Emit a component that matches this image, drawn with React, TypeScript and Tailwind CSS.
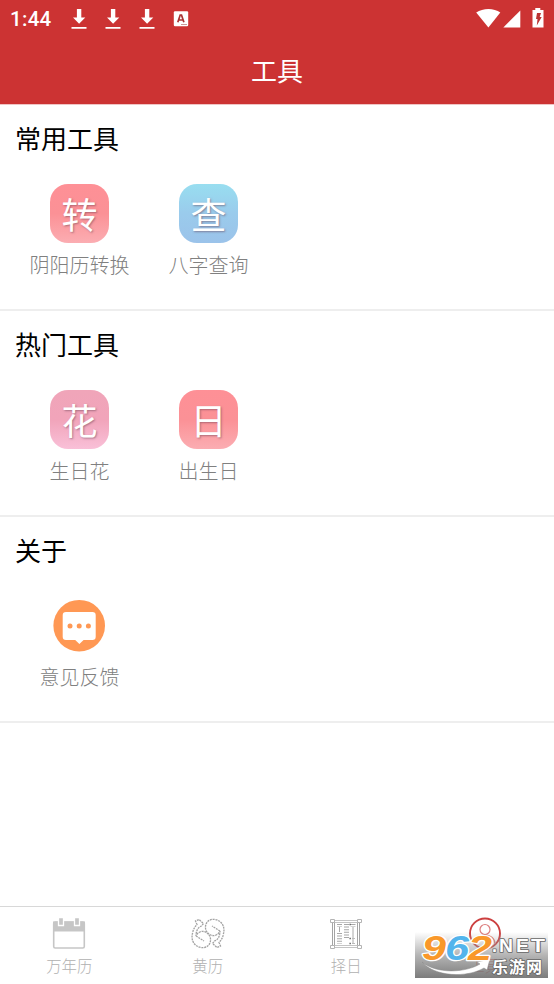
import type { ReactNode } from 'react';

type Tool = { label: string; glyph?: string; tile?: string };

const SECTIONS: { title: string; tools: Tool[] }[] = [
  {
    title: '常用工具',
    tools: [
      { label: '阴阳历转换', glyph: '转', tile: 'from-[#fe9096] via-[#fb9196] to-[#fbadb2]' },
      { label: '八字查询', glyph: '查', tile: 'from-[#98def0] via-[#9acbec] to-[#9bc3ea]' },
    ],
  },
  {
    title: '热门工具',
    tools: [
      { label: '生日花', glyph: '花', tile: 'from-[#f0a5b9] via-[#f1a4ba] to-[#f9c0d8]' },
      { label: '出生日', glyph: '日', tile: 'from-[#fe9096] via-[#fb9196] to-[#fbadb2]' },
    ],
  },
  { title: '关于', tools: [{ label: '意见反馈' }] },
];

function DownloadIcon() {
  return (
    <svg width="16" height="22" viewBox="0 0 16 22" fill="#fff">
      <path d="M5.9 0h4.4v8.4h4L8.1 14.8 2 8.4h3.9zM.5 18h15v1.8H.5z" />
    </svg>
  );
}

function StatusBar() {
  return (
    <div className="flex h-[38px] items-center justify-between pl-[10px] pr-[9px] text-white">
      <div className="flex items-center">
        <span className="w-[61px] pt-px font-[Roboto] text-[20.5px] font-medium leading-none tracking-[0.3px]">1:44</span>
        <div className="flex gap-[18px] pt-px">
          <DownloadIcon />
          <DownloadIcon />
          <DownloadIcon />
        </div>
        <svg className="ml-[18px]" width="16" height="16" viewBox="0 0 16 16">
          <rect x=".8" y=".3" width="14.4" height="15" rx="1.2" fill="#fff" />
          <path d="M4.8 11.2 7.2 4h1.3l2.4 7.2M5.6 9h4.4" fill="none" stroke="#a33" strokeWidth="1.7" />
          <path d="M8 13.5h6" stroke="#c99" />
        </svg>
      </div>
      <div className="flex items-start pb-[2px]">
        <svg width="25" height="20" viewBox="0 0 25 20" fill="#fff">
          <path d="M.2 4.6C7-.1 18-.1 24.3 4.6L12.4 19.4z" />
        </svg>
        <svg className="ml-[2px]" width="18" height="20" viewBox="0 0 18 20" fill="#fff">
          <path d="M17.3 2.5v17H.3z" />
        </svg>
        <svg className="ml-[11px] mr-px" width="12" height="20" viewBox="0 0 12 20">
          <path d="M3.3 0h5v2h3.2v17.5H.5V2h2.8z" fill="#fff" />
          <path d="M5 5h4L7.7 9h2l-4.9 8.5L5.5 11H4z" fill="#b33" />
        </svg>
      </div>
    </div>
  );
}

function FeedbackIcon() {
  return (
    <svg width="59" height="59" viewBox="0 0 59 59">
      <circle cx="29.2" cy="29.7" r="25.8" fill="#ff9854" />
      <path
        d="M16 16h26.4a3.3 3.3 0 0 1 3.3 3.3v21.4a3.3 3.3 0 0 1-3.3 3.3h-8.8l-4.2 4-4.2-4H16a3.3 3.3 0 0 1-3.3-3.3V19.3A3.3 3.3 0 0 1 16 16z"
        fill="#fff"
      />
      <g fill="#ff9854">
        <circle cx="20" cy="30" r="2.5" />
        <circle cx="29.2" cy="30" r="2.5" />
        <circle cx="38.4" cy="30" r="2.5" />
      </g>
    </svg>
  );
}

function ToolItem({ label, glyph, tile }: Tool) {
  return (
    <div className="flex w-[129px] flex-col items-center">
      {glyph ? (
        <div
          className={`flex size-[59px] items-center justify-center rounded-[18px] bg-linear-to-b pb-[2px] text-[36px] leading-none text-white [text-shadow:1px_1px_2px_rgba(100,60,80,0.5)] ${tile}`}
        >
          {glyph}
        </div>
      ) : (
        <FeedbackIcon />
      )}
      <span className="mt-[7px] text-[20px] font-light leading-[30px] text-[#808080]">{label}</span>
    </div>
  );
}

function CalendarIcon() {
  return (
    <svg width="36" height="36" viewBox="0 0 36 36">
      <rect x="2.7" y="6" width="30.6" height="26" rx="1.5" fill="#fff" stroke="#c6c6c6" strokeWidth="1.6" />
      <path d="M2 5.5h32v10H2z" fill="#c6c6c6" />
      <path d="M7.5 1.5h5v8h-5zM23.5 1.5h5v8h-5z" fill="#c6c6c6" stroke="#fff" strokeWidth="1.3" />
    </svg>
  );
}

// one fish: round loop at the bottom, body curling up the left side to a small head
const FISH = 'M9 16.5C13 13.5 20 17 20.5 23C21 29 16 32.5 11 31.5C3 30 1 23 2.5 17.5C3 14 4.5 11 7 8.5L5.5 5L9 3.5L13.5 7.5L11.5 10C8 11 6 15 6 20C7 18 8 17 9 16.5M6 20L14 25';

function AlmanacIcon() {
  return (
    <svg width="36" height="36" viewBox="0 0 36 36" fill="none" stroke="#a2a2a2" strokeWidth="1.3" strokeDasharray="2 .8">
      <path d={FISH} />
      <path d={FISH} transform="rotate(180 18 17.5)" />
    </svg>
  );
}

function ScrollIcon() {
  return (
    <svg width="36" height="36" viewBox="0 0 36 36" fill="none" stroke="#aaa">
      <path d="M5.5 4.5h25M5.5 6.5h25M5.5 29.5h25M5.5 31.5h25" stroke="#c4c4c4" />
      <path d="M4.5 5v26M6.5 5v26M29.5 5v26M31.5 5v26" stroke="#a4a4a4" />
      <path d="M2.5 3.5h4v3h-4zM29.5 3.5h4v3h-4zM2.5 29.5h4v3h-4zM29.5 29.5h4v3h-4z" fill="#fff" stroke="#b4b4b4" />
      <path d="M11.5 8v3M11.5 17v11M18.5 8v14M25 8v3" stroke="#a8a8a8" strokeWidth="5" strokeDasharray="1 1.6" />
      <path d="M11.5 11v5M25 11v17" stroke="#aaa" />
      <path d="M24 27.5h3M24 22.5h3" stroke="#bbb" />
      <path d="M21.5 8.5h1.3M21.5 22.5h1.3M21.5 27.5h1.3" stroke="#555" strokeWidth="1.5" />
    </svg>
  );
}

function ProfileIcon() {
  return (
    <svg width="36" height="36" viewBox="0 0 36 36" fill="none" stroke="#cc3f3f">
      <circle cx="18" cy="17.5" r="15" strokeWidth="1.9" />
      <circle cx="18" cy="13.5" r="5" stroke="#dd7f7f" strokeWidth="1.2" />
      <path d="M8 28c0-12 20-12 20 0" stroke="#dd7f7f" strokeWidth="1.2" />
    </svg>
  );
}

function NavItem({ label, active, children }: { label: string; active?: boolean; children: ReactNode }) {
  return (
    <div className="flex flex-1 flex-col items-center pt-[9px]">
      {children}
      <span className={`mt-[3px] text-[15.4px] font-light leading-5 ${active ? 'text-[#cc3333]' : 'text-[#b0b0b0]'}`}>
        {label}
      </span>
    </div>
  );
}

// Site stamp in the bottom right corner, drawn over the tab bar
function SiteStamp() {
  return (
    <div className="absolute bottom-[6px] right-[6px] h-[46px] w-[133px] bg-linear-to-b from-[#99999900] via-[#999999b8] to-[#757575f2]">
      <svg className="absolute -top-2 left-0 overflow-visible" width="133" height="54" viewBox="0 0 133 54">
        <path d="M7 38c14 12 43 11 58 2l-3-2 13-3-3 11-3-2C52 54 20 53 7 38z" fill="#fff" stroke="#888" strokeWidth=".5" />
        <g
          fontFamily="Liberation Sans"
          fontWeight="bold"
          fontStyle="italic"
          fontSize="35"
          stroke="#fff"
          strokeWidth="2.5"
          strokeLinejoin="round"
          paintOrder="stroke"
        >
          <text x="7" y="36" textLength="24" lengthAdjust="spacingAndGlyphs" fill="#f9982a">9</text>
          <text x="30" y="36" textLength="24" lengthAdjust="spacingAndGlyphs" fill="#52b4ec">6</text>
          <text x="53" y="36" textLength="24" lengthAdjust="spacingAndGlyphs" fill="#f9982a">2</text>
        </g>
        <g fill="#fff" stroke="#666" strokeWidth="1.6" strokeLinejoin="round" paintOrder="stroke" fontWeight="bold">
          <text x="77" y="28" fontFamily="Liberation Sans" fontSize="18" textLength="7">.</text>
          <text x="84" y="28" fontFamily="Liberation Sans" fontSize="18" textLength="14" lengthAdjust="spacingAndGlyphs">N</text>
          <text x="101" y="28" fontFamily="Liberation Sans" fontSize="18" textLength="13" lengthAdjust="spacingAndGlyphs">E</text>
          <text x="116" y="28" fontFamily="Liberation Sans" fontSize="18" textLength="14" lengthAdjust="spacingAndGlyphs">T</text>
          <text x="77" y="49" fontSize="16" textLength="50">乐游网</text>
        </g>
      </svg>
    </div>
  );
}

export default function App() {
  return (
    <div className="relative flex h-[984px] w-[554px] flex-col overflow-hidden bg-white font-['Noto_Sans_CJK_SC',sans-serif]">
      <header className="h-[104px] shrink-0 bg-[#cc3333]">
        <StatusBar />
        <h1 className="pt-[13px] text-center text-[26px] leading-[38px] text-white">工具</h1>
      </header>

      <main className="flex-1 border-t border-[#f0c4c4]">
        {SECTIONS.map(section => (
          <section key={section.title} className="h-[206px] border-b-2 border-[#eeeeee] pl-[15px] pt-[14px]">
            <h2 className="text-[26px] leading-[38px] text-black">{section.title}</h2>
            <div className="mt-[27px] flex">
              {section.tools.map(tool => (
                <ToolItem key={tool.label} {...tool} />
              ))}
            </div>
          </section>
        ))}
      </main>

      <nav className="flex h-[78px] shrink-0 border-t border-[#d8d8d8]">
        <NavItem label="万年历"><CalendarIcon /></NavItem>
        <NavItem label="黄历"><AlmanacIcon /></NavItem>
        <NavItem label="择日"><ScrollIcon /></NavItem>
        <NavItem label="工具" active><ProfileIcon /></NavItem>
      </nav>
      <SiteStamp />
    </div>
  );
}
